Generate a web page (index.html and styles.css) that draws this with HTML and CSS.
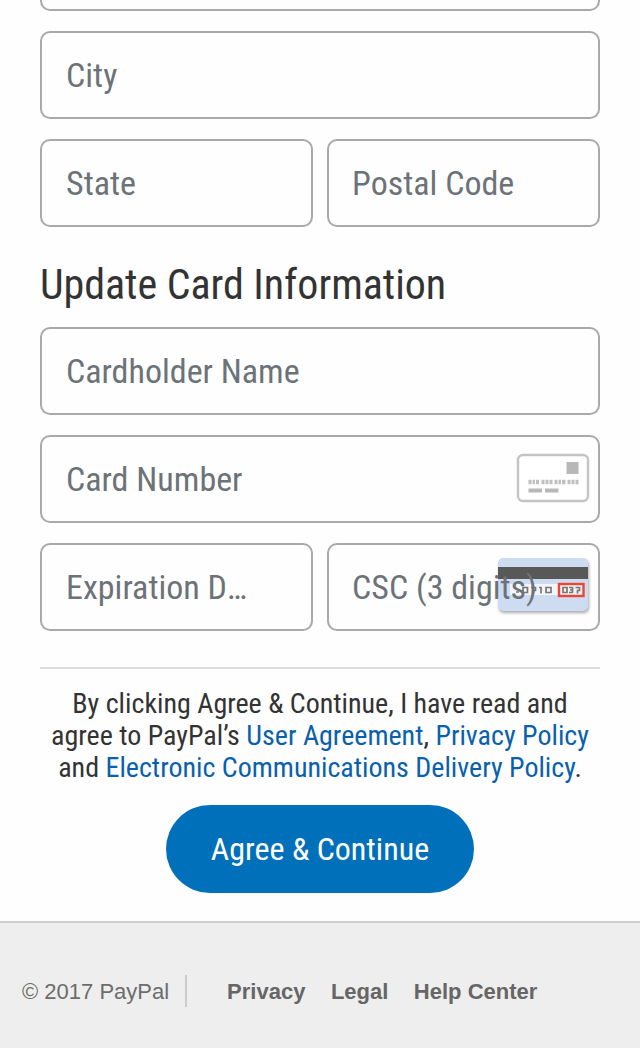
FILE: index.html
```html
<!DOCTYPE html>
<html lang="en">

<head>
    <meta charset="UTF-8">
    <meta name="viewport" content="width=device-width, initial-scale=1.0">
    <title>Update Card Information</title>
    <link rel="stylesheet" href="styles.css">
</head>

<body>
    <form class="container">
        <!-- Billing address -->
        <input class="field" type="text" aria-label="Address">
        <input class="field" type="text" placeholder="City">
        <div class="row">
            <input class="field" type="text" placeholder="State">
            <input class="field field-right" type="text" placeholder="Postal Code">
        </div>

        <!-- Card -->
        <h2>Update Card Information</h2>
        <input class="field" type="text" placeholder="Cardholder Name">
        <div class="field-wrap">
            <input class="field" type="text" placeholder="Card Number">
            <svg class="icon-card" width="74" height="50" viewBox="0 0 74 50">
                <rect x="2" y="2" width="70" height="46" rx="5" fill="#fff" stroke="#c4c4c4" stroke-width="2.4" />
                <rect x="50.500" y="9" width="12" height="12" fill="#b8b8b8" />
                <path d="M12.500 29h10.500M25.500 29h11M38.500 29h11M51.500 29h11" stroke="#c0c0c0" stroke-width="4.500" />
                <path d="M16 26v6M19.500 26v6M29 26v6M33 26v6M42 26v6M45.500 26v6M55 26v6M59 26v6" stroke="#fff" stroke-width="1" />
                <path d="M12.500 37.500h13.500M29 37.500h13.500" stroke="#b8b8b8" stroke-width="4" />
            </svg>
        </div>
        <div class="row">
            <input class="field field-exp" type="text" placeholder="Expiration Date">
            <div class="field-wrap">
                <svg class="icon-csc" width="96" height="60" viewBox="0 0 96 60">
                    <rect x="2" y="2" width="90" height="53" rx="5" fill="#cddcf1" />
                    <rect x="2" y="11" width="90" height="12" fill="#585858" />
                    <rect x="14" y="28" width="48" height="11" fill="#f3f5fa" />
                    <g fill="none" stroke="#777" stroke-width="1.700">
                        <path d="M20 36h3M27 31.500h4.500v5h-4.500zM35 31.500h4.500v3h-2v3M43 31.500h2v6M50 31.500h5v5h-5z" />
                        <rect x="63" y="28" width="24.500" height="12" fill="#f6f1f2" stroke="#ee4434" stroke-width="2.400" />
                        <path d="M67 31.500h4v5h-4zM73 31.500h3.500v5h-3.500M74 34h2.500M79.500 31.500h4v3h-2v3" />
                    </g>
                </svg>
                <input class="field field-right" type="text" placeholder="CSC (3 digits)">
            </div>
        </div>

        <p class="legal">
            By clicking Agree &amp; Continue, I have read and<br>
            agree to PayPal’s <a href="#">User Agreement</a>, <a href="#">Privacy Policy</a><br>
            and <a href="#">Electronic Communications Delivery Policy</a>.
        </p>
        <button type="submit">Agree &amp; Continue</button>
    </form>

    <footer class="footer">
        <span class="copyright">© 2017 PayPal</span>
        <a href="#">Privacy</a>
        <a href="#">Legal</a>
        <a href="#">Help Center</a>
    </footer>
</body>

</html>
```
FILE: styles.css
```css
* {
    box-sizing: border-box;
}

body {
    margin: 0;
    height: 1048px;
    overflow: hidden;
    background: #fefefe;
    color: #333;
    font-family: "Roboto Condensed", Roboto, sans-serif;
    font-stretch: 75%;
}

.container {
    /* first field is scrolled half out of view */
    margin-top: -77px;
    padding: 0 40px;
    height: 998px;
}

.field {
    display: block;
    width: 100%;
    height: 88px;
    margin: 0 0 20px;
    padding: 0 24px;
    border: 2px solid #a9a9a9;
    border-radius: 10px;
    background: transparent;
    font-family: inherit;
    font-stretch: inherit;
    font-size: 34px;
    color: #333;
    text-overflow: ellipsis;
}

.field::placeholder {
    color: #6c7378;
    opacity: 1;
}

.row {
    display: grid;
    grid-template-columns: 1fr 1fr;
    gap: 14px;
}

.field-exp {
    padding-right: 60px;
}

.field-right {
    padding-left: 23px;
}

.field-wrap {
    position: relative;
}

.icon-card {
    position: absolute;
    top: 18px;
    right: 10px;
    filter: blur(0.6px);
}

.icon-csc {
    position: absolute;
    top: 13px;
    right: 8px;
    filter: blur(0.5px) drop-shadow(1px 2px 1.5px #aaa);
}

.field-wrap .field {
    position: relative;
}

h2 {
    margin: 15px 0 19px;
    height: 46px;
    font-size: 42px;
    line-height: 46px;
    font-weight: 400;
    letter-spacing: -0.04px;
    white-space: nowrap;
}

.legal {
    margin: 16px 0 0;
    padding-top: 19px;
    border-top: 2px solid #dedede;
    font-size: 28px;
    line-height: 32px;
    text-align: center;
    white-space: nowrap;
}

.legal a {
    color: #0961ad;
    text-decoration: none;
}

button {
    display: block;
    width: 308px;
    height: 88px;
    margin: 21px auto 0;
    border: none;
    border-radius: 44px;
    background: #0070ba;
    color: #fff;
    font-family: inherit;
    font-stretch: inherit;
    font-size: 32px;
}

.footer {
    display: flex;
    align-items: center;
    height: 127px;
    padding: 12px 22px 0;
    border-top: 2px solid #cfcfcf;
    background: #eee;
    color: #6c6c6c;
    font-family: "Liberation Sans", Arial, sans-serif;
    font-stretch: normal;
    font-size: 22px;
}

.copyright {
    height: 32px;
    line-height: 34px;
    margin: 0 40px 2px 0;
    padding-right: 16px;
    border-right: 2px solid #ccc;
}

.footer a {
    margin-right: 25.5px;
    color: #666;
    font-weight: bold;
    text-decoration: none;
}
```
